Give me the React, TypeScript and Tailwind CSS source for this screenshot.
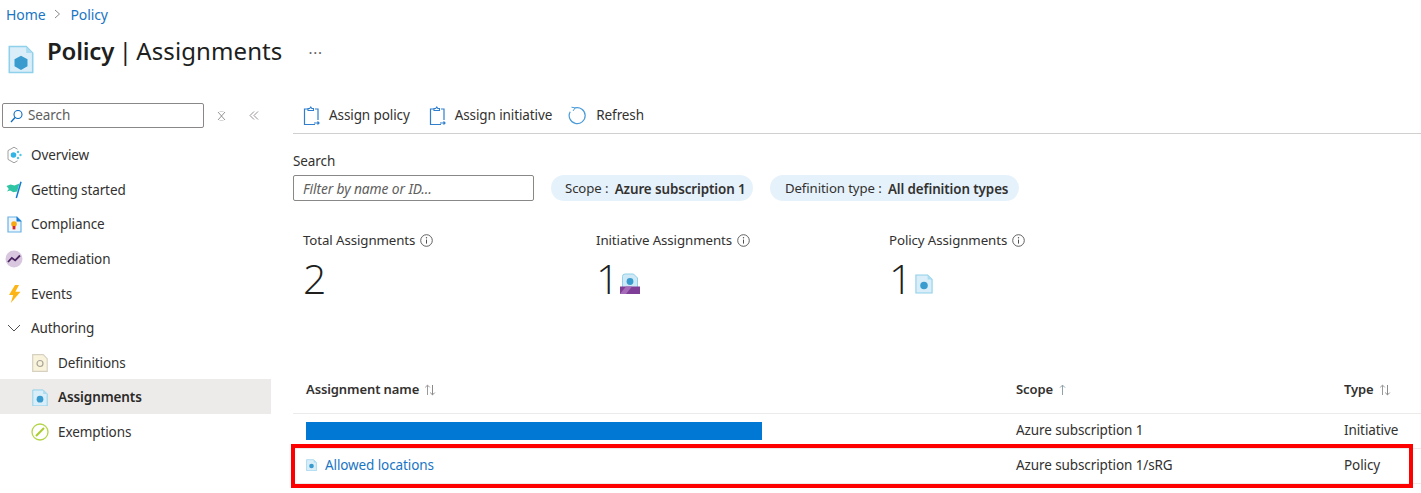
import React from "react";

const PolicyDoc = ({ size = 16, hex = false }: { size?: number; hex?: boolean }) => (
  <svg width={size} height={size * 1.12} viewBox="0 0 20 22" className="shrink-0">
    <path d="M1 1h13l5 5v15H1z" fill="#d9eef8" stroke="#8fd0ea" strokeWidth="1.2" />
    <path d="M14 1l5 5h-5z" fill="#a9dcf1" />
    {hex ? (
      <path d="M10 8l5 2.8v5.4L10 19l-5-2.8v-5.4z" fill="#3a9bcf" />
    ) : (
      <circle cx="10" cy="12.5" r="4.2" fill="#3a9bcf" />
    )}
  </svg>
);

const Clip = () => (
  <svg width="17" height="20" viewBox="0 0 17 20" fill="none" className="shrink-0">
    <path d="M5 3H1.5v15.5H12M12 3h3v11" stroke="#2f7fce" strokeWidth="1.2" />
    <path d="M5 4.5V2.5h1.7L7.8 1l1 1.5h1.7v2z" stroke="#2f7fce" strokeWidth="1.1" />
    <path d="M11 17h5M14.5 15.5l1.6 1.5-1.6 1.5" stroke="#2f7fce" strokeWidth="1.1" />
  </svg>
);

const Info = () => (
  <svg width="13" height="13" viewBox="0 0 13 13" fill="none" className="shrink-0">
    <circle cx="6.5" cy="6.5" r="5.8" stroke="#505050" strokeWidth="0.9" />
    <path d="M6.5 5.6v4" stroke="#505050" />
    <circle cx="6.5" cy="3.8" r="0.7" fill="#505050" />
  </svg>
);

const SortBoth = () => (
  <svg width="12" height="12" viewBox="0 0 12 12" fill="none" className="shrink-0">
    <path d="M3.5 11V1.2M1.2 3.4l2.3-2.3 2.3 2.3" stroke="#9a9a9a" />
    <path d="M8.5 1v9.8M6.2 8.6l2.3 2.3 2.3-2.3" stroke="#8a8a8a" />
  </svg>
);

const SortUp = () => (
  <svg width="9" height="12" viewBox="0 0 9 12" fill="none" className="shrink-0">
    <path d="M4.5 11V1.2M2 3.6l2.5-2.5L7 3.6" stroke="#8fa3ad" />
  </svg>
);

const navIcons: Record<string, React.ReactNode> = {
  Overview: (
    <svg width="17" height="18" viewBox="0 0 17 18" fill="none">
      <path d="M11.5 3.2L8 1.2 2 4.6v8.8l6 3.4 3.5-2" stroke="#a0a0a0" fill="none" />
      <circle cx="7.5" cy="9" r="2.8" fill="#31b5e6" />
      <circle cx="12" cy="6" r="1.2" fill="#50c8e8" />
      <circle cx="14.5" cy="9" r="1.2" fill="#50c8e8" />
      <circle cx="12" cy="12" r="1.2" fill="#50c8e8" />
    </svg>
  ),
  "Getting started": (
    <svg width="17" height="18" viewBox="0 0 17 18" fill="none">
      <path d="M0.5 5l4-1.6 4 1.2 5-2-2.4 8-3.6.6-3.4-1.8L1 10.5l1.8-2.6z" fill="#2fc4a3" />
      <path d="M15 .8L10.3 17" stroke="#1479d4" strokeWidth="1.5" />
    </svg>
  ),
  Compliance: (
    <svg width="15" height="17" viewBox="0 0 15 17" fill="none">
      <path d="M1 1h9l4 4v11H1z" fill="#eaf5fc" stroke="#69b1e6" strokeWidth="1.2" />
      <path d="M9.5 .5l5 5h-5z" fill="#1479d4" />
      <circle cx="7" cy="8" r="2.8" fill="#f7a711" />
      <path d="M5.6 10h2.8v3.4H5.6z" fill="#d8232a" />
    </svg>
  ),
  Remediation: (
    <svg width="18" height="18" viewBox="0 0 18 18" fill="none">
      <circle cx="9" cy="9" r="8.5" fill="#d9c7df" />
      <path d="M3 12l3.8-4 3.4 2.4L15 5.5" stroke="#4b2560" strokeWidth="1.8" />
    </svg>
  ),
  Events: (
    <svg width="13" height="18" viewBox="0 0 13 18">
      <path d="M7 0L1 10h4.2L2.8 18 12.5 6.8H7.4L11 0z" fill="#fdb515" />
    </svg>
  ),
};

const NavItem = ({ label }: { label: string }) => (
  <div className="flex h-[34.6px] items-center pt-[2px]">
    <span className="flex w-[31px] justify-center pl-[1px] pr-[4px]">{navIcons[label]}</span>
    <span>{label}</span>
  </div>
);

const SubItem = ({
  label,
  icon,
  active,
}: {
  label: string;
  icon: React.ReactNode;
  active?: boolean;
}) => (
  <div className={`flex h-[34.6px] items-center pl-[32px] pt-[2px] ${active ? "bg-[#edebe9] font-semibold text-[#2b2a29]" : ""}`}>
    <span className="flex w-[26px] shrink-0 items-center">{icon}</span>
    <span>{label}</span>
  </div>
);

const Stat = ({ label, value, icon, w }: { label: string; value: string; icon?: React.ReactNode; w: string }) => (
  <div className={w}>
    <div className="flex h-[18px] items-center gap-[5px] text-[13.3px] leading-[18px]">
      {label}
      <Info />
    </div>
    <div className="mt-[7px] flex items-end gap-[3px]">
      <span className="text-[41px] leading-[44px] font-light text-[#201f1e] font-['Open_Sans',sans-serif]">{value}</span>
      {icon && <span className="mb-[6px]">{icon}</span>}
    </div>
  </div>
);

const Cols = ({ children, className = "" }: { children: React.ReactNode; className?: string }) => (
  <div className={`grid grid-cols-[710px_328px_1fr] items-center pl-[13px] ${className}`}>{children}</div>
);

export default function App() {
  return (
    <div className="relative h-[493px] w-[1421px] overflow-hidden bg-white font-['Noto_Sans',sans-serif] text-[13.5px] tracking-[-0.1px] text-[#323130]">
      <div className="flex h-[28px] items-center gap-[9px] pl-[6px] text-[14px] text-[#1a75c4]">
        <span>Home</span>
        <svg width="7" height="10" viewBox="0 0 7 10" fill="none">
          <path d="M1 1l4.5 4L1 9" stroke="#8a8886" />
        </svg>
        <span>Policy</span>
      </div>

      <div className="flex h-[72px] items-start">
        <div className="ml-[8px] mt-[17px] w-[39px]">
          <PolicyDoc size={26} hex />
        </div>
        <h1 className="mt-[5px] text-[24px] leading-[36px] tracking-[-0.2px] text-[#201f1e] [word-spacing:-1.5px]">
          <span className="font-semibold">Policy</span> | <span className="tracking-[0.1px]">Assignments</span>
        </h1>
        <span className="ml-[26px] mt-[9px] text-[15px] leading-[30px] tracking-[0.8px] text-[#605e5c]">···</span>
      </div>

      <div className="flex">
        <aside className="w-[271px] shrink-0">
          <div className="flex h-[37px] items-start">
            <div className="ml-[2px] mt-[3px] flex h-[25px] w-[202px] items-center gap-[5px] rounded-[2px] border border-[#8a8886] pl-[7px] text-[#605e5c]">
              <svg width="13" height="14" viewBox="0 0 13 14" fill="none">
                <circle cx="8" cy="5.5" r="4" stroke="#0f6cbd" strokeWidth="1.1" />
                <path d="M5 8.5L1 13" stroke="#0f6cbd" strokeWidth="1.3" />
              </svg>
              Search
            </div>
            <svg width="9" height="10" viewBox="0 0 9 10" fill="none" className="ml-[13px] mt-[11px]">
              <path d="M2.5 .5h4M2.5 9.5h4" stroke="#c4c4c4" strokeWidth="0.7" />
              <path d="M1 1l7 8M8 1L1 9" stroke="#7a7a7a" strokeWidth="0.8" />
            </svg>
            <svg width="10" height="9" viewBox="0 0 10 9" fill="none" className="ml-[23px] mt-[11px]">
              <path d="M5 .5l-4 4 4 4M9 .5l-4 4 4 4" stroke="#8a8886" strokeWidth="0.9" />
            </svg>
          </div>
          <NavItem label="Overview" />
          <NavItem label="Getting started" />
          <NavItem label="Compliance" />
          <NavItem label="Remediation" />
          <NavItem label="Events" />
          <div className="flex h-[34.6px] items-center pt-[2px]">
            <span className="flex w-[31px] justify-center pr-[3px]">
              <svg width="14" height="8" viewBox="0 0 14 8" fill="none">
                <path d="M1 1l6 6 6-6" stroke="#505050" />
              </svg>
            </span>
            <span>Authoring</span>
          </div>
          <SubItem
            label="Definitions"
            icon={
              <svg width="16" height="18" viewBox="0 0 16 18">
                <path d="M.7.7h10.5l4 4v12.6H.7z" fill="#faf3dc" stroke="#d5d0c0" strokeWidth="1.2" />
                <circle cx="8" cy="9.5" r="3" fill="none" stroke="#a8a49a" strokeWidth="1.2" />
              </svg>
            }
          />
          <SubItem label="Assignments" active icon={<PolicyDoc size={16} />} />
          <SubItem
            label="Exemptions"
            icon={
              <svg width="18" height="18" viewBox="0 0 18 18" fill="none" className="-ml-[1px]">
                <circle cx="9" cy="9" r="8" stroke="#b4d44a" strokeWidth="1.3" fill="#fff" />
                <path d="M5 13l8-8" stroke="#a9cc2e" strokeWidth="2" />
              </svg>
            }
          />
        </aside>

        <main className="ml-[22px] min-w-0 flex-1">
          <div className="flex h-[34px] items-center border-b border-[#d2d0ce] pb-[2px] pl-[10px]">
            <span className="flex items-center gap-[9px]">
              <Clip /> Assign policy
            </span>
            <span className="ml-[19px] flex items-center gap-[9px]">
              <Clip /> Assign initiative
            </span>
            <span className="ml-[16px] flex items-center gap-[9px]">
              <svg width="19" height="19" viewBox="0 0 19 19" fill="none">
                <path d="M7 1.9a8 8 0 1 1-4.8 3.8" stroke="#4a9bd8" strokeWidth="1.2" />
                <path d="M3.5 1.2l3.6 .7-2 3" stroke="#4a9bd8" />
              </svg>
              Refresh
            </span>
          </div>

          <div className="mt-[18px] leading-[18px]">Search</div>
          <div className="mt-[5px] flex gap-[17px]">
            <div className="flex h-[26px] w-[241px] items-center rounded-[2px] border border-[#8a8886] pl-[9px] pt-[2px] text-[13.8px] italic text-[#605e5c]">
              Filter by name or ID...
            </div>
            <div className="flex h-[26px] w-[202px] items-center rounded-full bg-[#e6f2fb] pl-[14px] pt-[2px] text-[13.2px]">
              Scope :&nbsp;<span className="ml-[3px] text-[13.4px] font-semibold">Azure subscription 1</span>
            </div>
            <div className="flex h-[26px] w-[249px] items-center rounded-full bg-[#e6f2fb] pl-[15px] pt-[2px] text-[13.2px]">
              Definition type :&nbsp;<span className="ml-[3px] text-[13.4px] font-semibold">All definition types</span>
            </div>
          </div>

          <div className="mt-[30px] flex pl-[10px]">
            <Stat w="w-[293px]" label="Total Assignments" value="2" />
            <Stat
              w="w-[293px]"
              label="Initiative Assignments"
              value="1"
              icon={
                <svg width="20" height="21" viewBox="0 0 20 21" className="-ml-[2px]">
                  <path d="M2.5 3.5Q2.5 1 5 1h8.5l4 4v10h-15z" fill="#cfe8f5" stroke="#8fd0ea" />
                  <circle cx="10" cy="8.5" r="3.4" fill="#3a9bcf" />
                  <path d="M0 13.5h20V21H0z" fill="#7f3f98" />
                  <path d="M0 21l6-7.5h6L6 21z" fill="#a56bb8" />
                </svg>
              }
            />
            <Stat w="w-[200px]" label="Policy Assignments" value="1" icon={<PolicyDoc size={18} />} />
          </div>

          <Cols className="mt-[66px] h-[48px] border-b border-[#edebe9] text-[13px] font-semibold text-[#323130]">
            <div className="flex items-center gap-[5px]">
              Assignment name <SortBoth />
            </div>
            <div className="flex items-center gap-[5px]">
              Scope <SortUp />
            </div>
            <div className="flex items-center gap-[5px]">
              Type <SortBoth />
            </div>
          </Cols>
          <Cols className="h-[35px] border-b border-[#edebe9]">
            <div className="h-[18px] w-[456px] bg-[#0078d4]" />
            <div className="pb-[2px]">Azure subscription 1</div>
            <div className="pb-[2px]">Initiative</div>
          </Cols>
          <Cols className="h-[35px] border-b border-[#edebe9]">
            <div className="flex items-center gap-[8px] pb-[2px] text-[#1a75c4]">
              <PolicyDoc size={11} /> Allowed locations
            </div>
            <div className="pb-[2px]">Azure subscription 1/sRG</div>
            <div className="pb-[2px]">Policy</div>
          </Cols>
        </main>
      </div>

      <div className="absolute left-[291px] top-[444px] h-[44px] w-[1122px] border-[4px] border-[#ff0000]" />
    </div>
  );
}
